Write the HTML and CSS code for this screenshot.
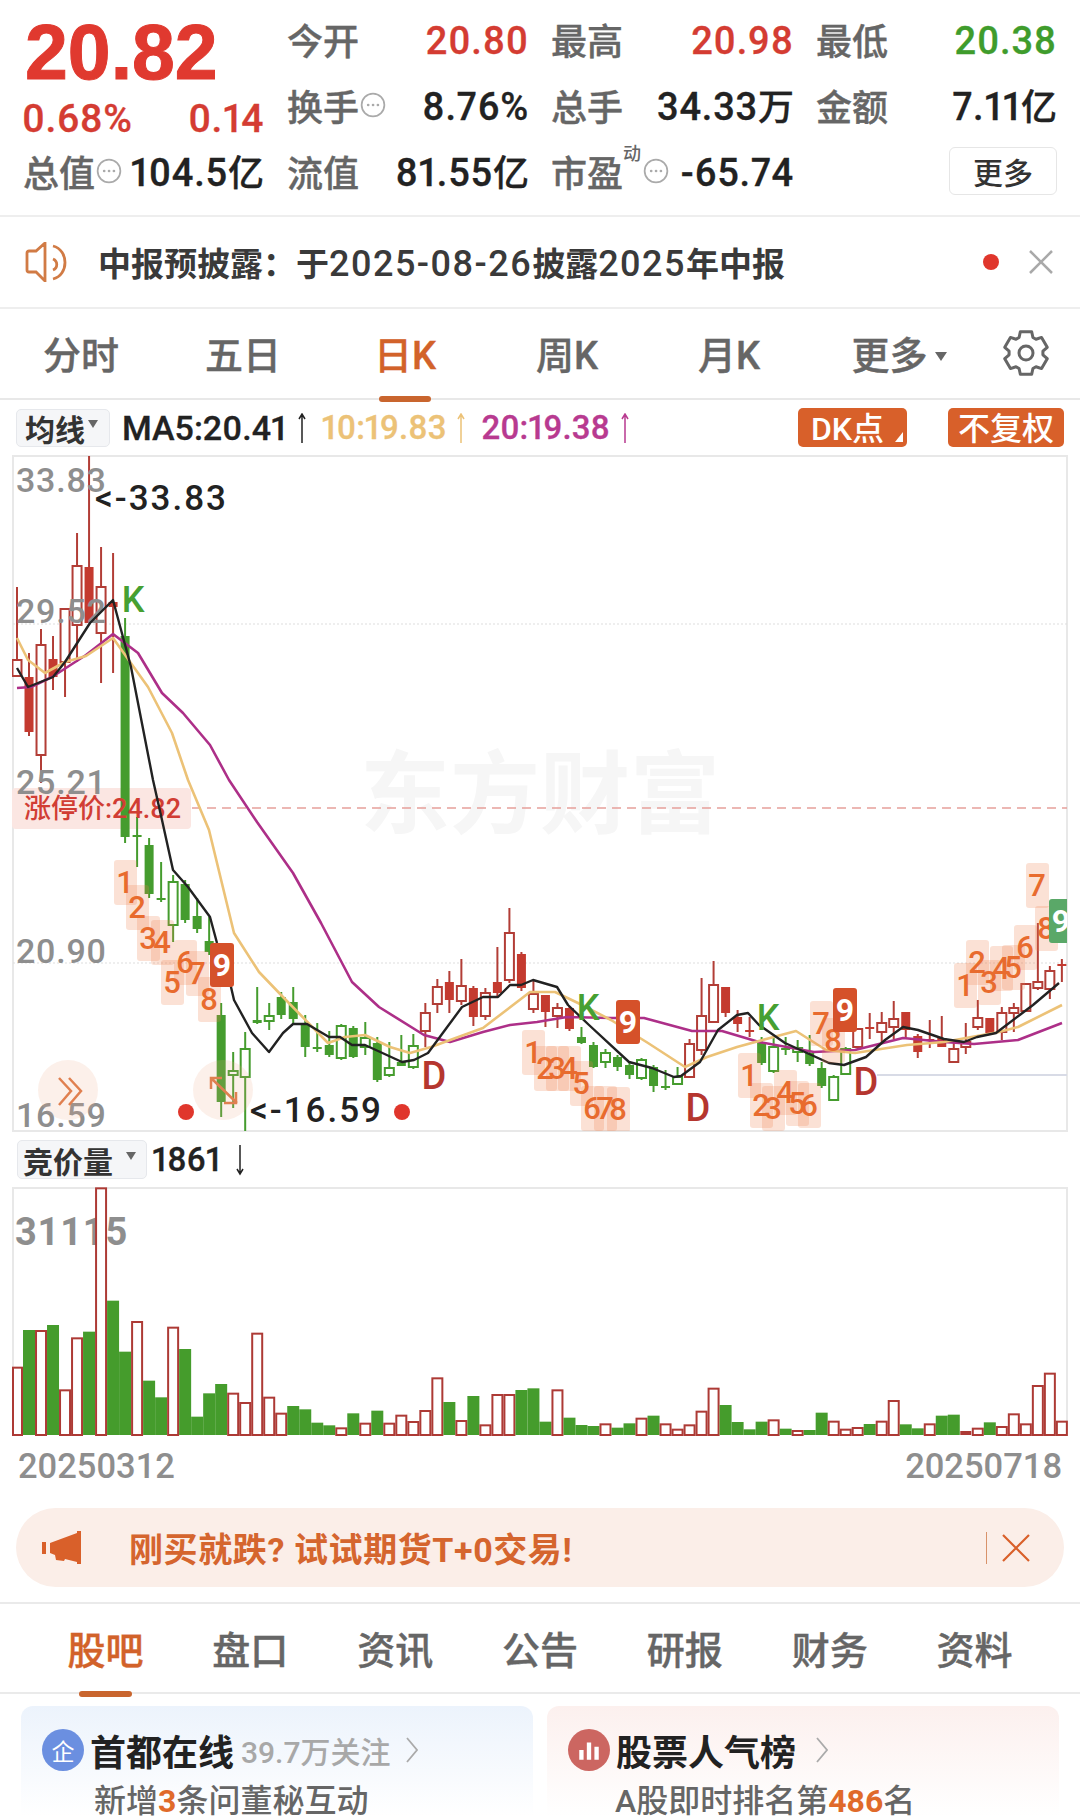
FILE: index.html
```html
<!DOCTYPE html>
<html lang="zh-CN">

<head>
    <meta charset="UTF-8">
    <meta name="viewport" content="width=device-width, initial-scale=1.0">
    <title>首都在线 日K</title>
    <link rel="stylesheet" href="styles.css">
</head>

<body>
    <section class="quote">
        <div class="price">20.82</div>
        <div class="cell"><span class="label">今开</span><span class="num up">20.80</span></div>
        <div class="cell"><span class="label">最高</span><span class="num up">20.98</span></div>
        <div class="cell"><span class="label">最低</span><span class="num down">20.38</span></div>

        <div class="change"><span>0.68%</span><span>0.14</span></div>
        <div class="cell">
            <span class="label with-dots">换手<svg class="dots" viewBox="0 0 24 24"><circle cx="12" cy="12" r="10.5"/><path d="M7.5 12h.1M12 12h.1M16.5 12h.1"/></svg></span>
            <span class="num">8.76%</span>
        </div>
        <div class="cell"><span class="label">总手</span><span class="num">34.33<span class="unit">万</span></span></div>
        <div class="cell"><span class="label">金额</span><span class="num">7.11<span class="unit">亿</span></span></div>

        <div class="cell cell-first">
            <span class="label with-dots">总值<svg class="dots" viewBox="0 0 24 24"><circle cx="12" cy="12" r="10.5"/><path d="M7.5 12h.1M12 12h.1M16.5 12h.1"/></svg></span>
            <span class="num">104.5<span class="unit">亿</span></span>
        </div>
        <div class="cell"><span class="label">流值</span><span class="num">81.55<span class="unit">亿</span></span></div>
        <div class="cell">
            <span class="label with-dots">市盈<sup class="dyn">动</sup><svg class="dots" viewBox="0 0 24 24"><circle cx="12" cy="12" r="10.5"/><path d="M7.5 12h.1M12 12h.1M16.5 12h.1"/></svg></span>
            <span class="num">-65.74</span>
        </div>
        <div class="cell cell-more"><button class="more-btn">更多</button></div>
    </section>

    <section class="notice">
        <svg class="notice-icon" viewBox="0 0 44 40">
            <path d="M11 9H4a2 2 0 0 0-2 2v17a2 2 0 0 0 2 2h7l9 9V1z"/>
            <path d="M28 17c5 2 5 9 0 11"/>
            <path d="M28 4c16 4 16 29 0 33"/>
        </svg>
        <span class="notice-text">中报预披露：于<span class="wide">2025-08-26</span>披露<span class="wide">2025</span>年中报</span>
        <i class="red-dot"></i>
        <svg class="notice-close" viewBox="0 0 24 24"><path d="M1 1l22 22M23 1L1 23"/></svg>
    </section>

    <nav class="period-tabs">
        <a>分时</a>
        <a>五日</a>
        <a class="active">日K</a>
        <a>周K</a>
        <a>月K</a>
        <a class="tab-more">更多<i class="tri"></i></a>
        <svg class="gear" viewBox="0 0 46 46">
            <path d="M17.31 1.75H28.69L29.91 7.47 32.99 9.25 38.56 7.44 44.25 17.31 39.91 21.22V24.78L44.25 28.69 38.56 38.56 32.99 36.75 29.91 38.53 28.69 44.25H17.31L16.09 38.53 13.01 36.75 7.44 38.56 1.75 28.69 6.09 24.78V21.22L1.75 17.31 7.44 7.44 13.01 9.25 16.09 7.47z"/>
            <circle cx="23" cy="23" r="7"/>
        </svg>
    </nav>

    <div class="ma-row">
        <span class="pill">均线<i class="tri tri-dark"></i></span>
        <span class="ma ma5">MA5:20.41<svg class="arrow" viewBox="0 0 10 30"><path d="M5 30V1M2 6l3-5 3 5"/></svg></span>
        <span class="ma ma10">10:19.83<svg class="arrow" viewBox="0 0 10 30"><path d="M5 30V1M2 6l3-5 3 5"/></svg></span>
        <span class="ma ma20">20:19.38<svg class="arrow" viewBox="0 0 10 30"><path d="M5 30V1M2 6l3-5 3 5"/></svg></span>
        <span class="tag tag-dk">DK点<i class="tag-corner"></i></span>
        <span class="tag tag-fq">不复权</span>
    </div>

    <svg id="kline" class="chart" width="1080" height="677" viewBox="0 455 1080 677">
        <defs>
            <clipPath id="klineClip"><rect x="12" y="456" width="1055" height="675"/></clipPath>
        </defs>
        <rect class="frame" x="13" y="456" width="1054" height="675"/>
        <text class="watermark" x="540" y="795">东方财富</text>
        <path class="grid" d="M13 624H1067M13 963H1067"/>
        <path class="limit-line" d="M192 808H1067"/>
        <path class="support" d="M877 1075H1067"/>
        <rect class="limit-bg" x="12" y="788" width="179" height="41" rx="4"/>
        <g id="candles" clip-path="url(#klineClip)"></g>
        <text class="axis" x="16" y="480">33.83</text>
        <text class="axis" x="16" y="611">29.52</text>
        <text class="axis" x="16" y="782">25.21</text>
        <text class="axis" x="16" y="951">20.90</text>
        <text class="axis" x="16" y="1115">16.59</text>
        <text class="limit-text" x="24" y="809">涨停价:24.82</text>
        <g id="maLines"></g>
        <g id="signals" clip-path="url(#klineClip)"></g>
        <text class="extreme" x="95" y="498">&lt;-33.83</text>
        <text class="extreme" x="250" y="1110">&lt;-16.59</text>
        <circle class="dot" cx="186" cy="1112" r="8"/>
        <circle class="dot" cx="402" cy="1112" r="8"/>
        <circle class="float-btn" cx="68" cy="1090" r="30"/>
        <path class="float-mark" d="M59 1078l12 13-12 14M69 1078l12 13-12 14"/>
        <circle class="float-btn" cx="223" cy="1090" r="30"/>
        <path class="float-mark" d="M211 1078l26 25M211 1089v-11h11M236 1092v11h-12"/>
    </svg>

    <div class="vol-row">
        <span class="pill pill-vol">竞价量<i class="tri tri-dark"></i></span>
        <span class="ma">1861<svg class="arrow arrow-down" viewBox="0 0 10 30"><path d="M5 0v29M2 24l3 5 3-5"/></svg></span>
    </div>

    <svg id="volume" class="chart" width="1080" height="249" viewBox="0 1187 1080 249">
        <path class="frame-open" d="M13 1436V1188H1067V1436"/>
        <text class="axis axis-bold" x="15" y="1232">31115</text>
        <g id="volBars"></g>
    </svg>

    <div class="dates"><span>20250312</span><span>20250718</span></div>

    <div class="ad">
        <svg class="ad-icon" viewBox="0 0 40 36">
            <path d="M0 12h4v12H0zM8 13L35 3V1h4v33h-4v-2l-12-3-1 2-8-1-1-5-5-2z"/>
        </svg>
        <span class="ad-text">刚买就跌? 试试期货T+0交易!</span>
        <i class="ad-sep"></i>
        <svg class="ad-close" viewBox="0 0 28 28"><path d="M1 1l26 26M27 1L1 27"/></svg>
    </div>

    <nav class="news-tabs">
        <a class="active">股吧</a>
        <a>盘口</a>
        <a>资讯</a>
        <a>公告</a>
        <a>研报</a>
        <a>财务</a>
        <a>资料</a>
    </nav>

    <div class="cards">
        <div class="card card-blue">
            <div class="card-head">
                <span class="badge badge-blue">企</span>
                <strong>首都在线</strong>
                <span class="follow">39.7万关注</span>
                <svg class="chev" viewBox="0 0 12 26"><path d="M1 1l10 12L1 25"/></svg>
            </div>
            <p class="card-sub">新增<b>3</b>条问董秘互动</p>
        </div>
        <div class="card card-red">
            <div class="card-head">
                <span class="badge badge-red"><svg viewBox="0 0 24 24"><path d="M3 12h4v9H3zM10 5h4v16h-4zM17 9h4v12h-4z"/></svg></span>
                <strong>股票人气榜</strong>
                <svg class="chev chev-far" viewBox="0 0 12 26"><path d="M1 1l10 12L1 25"/></svg>
            </div>
            <p class="card-sub">A股即时排名第<b>486</b>名</p>
        </div>
    </div>

    <script src="chart.js"></script>
</body>

</html>
```

FILE: styles.css
```css
* {
    box-sizing: border-box;
}

html,
body {
    margin: 0;
    height: 1820px;
    overflow: hidden;
}

body {
    width: 1080px;
    background: #fff;
    color: #222;
    font-family: Roboto, "Noto Sans CJK SC", sans-serif;
}

/* quote block */
.quote {
    display: grid;
    grid-template-columns: 242px 242px 243px 241px;
    grid-auto-rows: 66px;
    column-gap: 22px;
    height: 217px;
    padding: 8px 21px 0 23px;
    border-bottom: 2px solid #eee;
}

.price {
    font-family: "Liberation Sans", sans-serif;
    font-size: 77px;
    font-weight: 700;
    line-height: 1;
    color: #e0392f;
    padding: 6px 0 0 2px;
    -webkit-text-stroke: 1px #e0392f;
}

.cell {
    display: flex;
    align-items: center;
    justify-content: space-between;
}

.cell-first {
    padding-right: 1px;
}

.label {
    font-size: 36px;
    color: #666;
    font-weight: 500;
    white-space: nowrap;
    padding-bottom: 5px;
    -webkit-text-stroke: 0.4px #666;
}

.with-dots {
    display: flex;
    align-items: center;
}

.dots {
    width: 26px;
    height: 26px;
    margin-left: 1px;
    fill: none;
    stroke: #aaa;
    stroke-width: 1.6;
    stroke-linecap: round;
}

.dots path {
    stroke-width: 2.4;
}

.dyn {
    font-size: 18px;
    align-self: flex-start;
    margin: 0 1px 0 0;
    line-height: 1;
    color: #666;
    -webkit-text-stroke: 0;
}

.num {
    font-size: 38px;
    font-weight: 500;
    letter-spacing: 0.8px;
    line-height: 44px;
    white-space: nowrap;
    font-feature-settings: "pnum";
    -webkit-text-stroke: 0.3px currentColor;
}

.unit {
    font-size: 36px;
    line-height: 0;
    letter-spacing: 0;
}

.up,
.change {
    color: #d43c32;
}

.down {
    color: #3f9c2c;
}

.change {
    display: flex;
    justify-content: space-between;
    margin: 0 1px 0 -1px;
    padding-top: 26px;
    font-size: 39px;
    font-weight: 500;
    letter-spacing: 0.5px;
    line-height: 1;
    font-feature-settings: "pnum";
    -webkit-text-stroke: 0.3px currentColor;
}

.cell-more {
    justify-content: flex-end;
    padding-bottom: 4px;
}

.more-btn {
    width: 108px;
    height: 48px;
    border: 1px solid #e6e6e6;
    border-radius: 6px;
    background: #fff;
    color: #333;
    font-family: inherit;
    font-size: 30px;
    font-weight: 500;
    padding: 0;
}

/* notice */
.notice {
    display: flex;
    align-items: center;
    height: 92px;
    padding: 0 27px 0 25px;
    border-bottom: 2px solid #eee;
}

.notice-icon {
    width: 44px;
    height: 40px;
    fill: none;
    stroke: #d17b45;
    stroke-width: 2.8;
}

.notice-text {
    margin-left: 29px;
    font-size: 33px;
    font-weight: 700;
    color: #3a3a3a;
    flex: 1;
    white-space: nowrap;
}

.wide {
    font-size: 36px;
    font-weight: 500;
    letter-spacing: 1.5px;
}

.red-dot {
    width: 16px;
    height: 16px;
    border-radius: 50%;
    background: #e0362c;
    margin-right: 30px;
}

.notice-close {
    width: 24px;
    height: 24px;
    fill: none;
    stroke: #a9a9a9;
    stroke-width: 2.5;
}

/* period tabs */
.period-tabs {
    display: flex;
    align-items: center;
    height: 91px;
    padding-bottom: 3px;
    border-bottom: 2px solid #e8e8e8;
}

.period-tabs a {
    position: relative;
    width: 162px;
    text-align: center;
    font-size: 38px;
    font-weight: 500;
    color: #666;
    -webkit-text-stroke: 0.4px currentColor;
}

.period-tabs a.tab-more {
    padding-left: 16px;
}

.tab-more .tri {
    margin-left: 7px;
}

.period-tabs a.active,
.news-tabs a.active {
    color: #d2622a;
}

.period-tabs a.active::after {
    content: "";
    position: absolute;
    left: 55px;
    bottom: -22px;
    width: 52px;
    height: 6px;
    border-radius: 3px;
    background: #c9652e;
}

.tri {
    display: inline-block;
    width: 0;
    height: 0;
    margin-left: 5px;
    vertical-align: 8px;
    border-left: 6px solid transparent;
    border-right: 6px solid transparent;
    border-top: 9px solid #666;
}

.gear {
    width: 46px;
    height: 46px;
    margin: 2px 0 0 31px;
    fill: none;
    stroke: #666;
    stroke-width: 3;
    stroke-linejoin: round;
}

/* ma row */
.ma-row {
    display: flex;
    align-items: center;
    height: 55px;
    padding: 0 16px;
}

.pill {
    display: inline-flex;
    align-items: center;
    flex: none;
    width: 94px;
    height: 38px;
    padding: 0 0 0 8px;
    border: 1px solid #e6e8ec;
    border-radius: 5px;
    background: #f5f6f8;
    font-size: 30px;
    font-weight: 700;
    color: #333;
}

.tri-dark {
    margin-left: 3px;
    vertical-align: 0;
    border-left-width: 5px;
    border-right-width: 5px;
    border-top-width: 8px;
    margin-top: -8px;
}

.ma {
    display: inline-flex;
    align-items: center;
    margin-left: 12px;
    font-size: 33px;
    font-weight: 500;
    color: #222;
    font-feature-settings: "pnum";
    -webkit-text-stroke: 0.3px currentColor;
}

.ma5 {
    font-size: 34px;
}

.ma10 {
    color: #ecc277;
    margin-left: 15px;
}

.ma20 {
    color: #b83a90;
    margin-left: 15px;
}

.arrow {
    width: 10px;
    height: 30px;
    margin-left: 10px;
    fill: none;
    stroke: currentColor;
    stroke-width: 1.5;
}

.tag {
    position: relative;
    display: flex;
    align-items: center;
    justify-content: center;
    height: 39px;
    padding-bottom: 3px;
    border-radius: 5px;
    background: #d8602a;
    color: #fff;
    font-size: 32px;
    font-weight: 500;
}

.tag-dk {
    width: 109px;
    margin-left: auto;
    padding-right: 10px;
}

.tag-corner {
    position: absolute;
    right: 4px;
    bottom: 5px;
    border-left: 8px solid transparent;
    border-bottom: 10px solid #fff;
}

.tag-fq {
    width: 116px;
    margin-left: 41px;
}

/* charts */
.chart {
    display: block;
}

.frame {
    fill: #fff;
    stroke: #e8e8e8;
    stroke-width: 2;
}

.frame-open {
    fill: none;
    stroke: #e8e8e8;
    stroke-width: 2;
}

.watermark {
    font-size: 90px;
    font-weight: 700;
    fill: #f6f6f6;
    text-anchor: middle;
    dominant-baseline: central;
}

.grid {
    stroke: #ddd;
    stroke-width: 1;
    stroke-dasharray: 2 2;
}

.limit-line {
    stroke: #e6a09a;
    stroke-width: 1.5;
    stroke-dasharray: 9 6;
}

.support {
    stroke: #d8dbe6;
    stroke-width: 2;
}

.limit-bg {
    fill: #fbe6e2;
}

.limit-text {
    font-size: 27px;
    font-weight: 500;
    fill: #d13d34;
    dominant-baseline: central;
}

.axis {
    font-size: 34px;
    font-weight: 500;
    letter-spacing: 0.8px;
    fill: #8e8e8e;
    dominant-baseline: central;
}

.axis-bold {
    font-weight: 700;
    font-size: 38px;
}

.extreme {
    font-size: 35px;
    font-weight: 500;
    letter-spacing: 2px;
    fill: #222;
    dominant-baseline: central;
}

.dot {
    fill: #e0362c;
}

.float-btn {
    fill: rgba(240, 170, 140, 0.18);
}

.float-mark {
    fill: none;
    stroke: #e08050;
    stroke-width: 2.5;
}

.ma-line {
    fill: none;
    stroke-linejoin: round;
}

.td-box {
    fill: rgba(238, 130, 80, 0.24);
}

.td-num {
    font-size: 31px;
    font-weight: 500;
    fill: #e86b2e;
    text-anchor: middle;
    dominant-baseline: central;
}

.nine-num {
    font-size: 32px;
    font-weight: 700;
    fill: #fff;
    text-anchor: middle;
    dominant-baseline: central;
}

.sig-k,
.sig-d {
    font-weight: 500;
    text-anchor: middle;
    dominant-baseline: central;
}

.sig-k {
    font-size: 36px;
    fill: #46a032;
}

.sig-d {
    font-size: 38px;
    fill: #b5362f;
}

.vol-row {
    display: flex;
    align-items: center;
    height: 55px;
    padding: 0 0 0 17px;
}

.pill-vol {
    width: 130px;
    height: 39px;
    padding: 0 0 0 5px;
    font-size: 30px;
}

.pill-vol .tri {
    margin-left: 13px;
}

.vol-row .ma {
    margin-left: 5px;
    font-size: 33px;
}

.arrow-down {
    margin-left: 14px;
    height: 32px;
}

.dates {
    display: flex;
    justify-content: space-between;
    height: 72px;
    padding: 10px 18px 0 18px;
    font-size: 34.5px;
    font-weight: 500;
    line-height: 40px;
    color: #8e8e8e;
}

/* ad bar */
.ad {
    display: flex;
    align-items: center;
    height: 79px;
    margin: 0 16px;
    padding: 0 34px 0 26px;
    border-radius: 40px;
    background: #fbeee8;
}

.ad-icon {
    width: 40px;
    height: 36px;
    fill: #d9602a;
}

.ad-text {
    margin-left: 47px;
    flex: 1;
    font-size: 34px;
    font-weight: 700;
    letter-spacing: 0.6px;
    color: #d5652e;
}

.ad-sep {
    width: 1px;
    height: 32px;
    background: #d8926a;
}

.ad-close {
    width: 28px;
    height: 28px;
    margin-left: 15px;
    fill: none;
    stroke: #d9602a;
    stroke-width: 2.2;
}

/* news tabs */
.news-tabs {
    display: flex;
    align-items: center;
    height: 92px;
    margin-top: 15px;
    padding: 0 33px 2px;
    border-top: 2px solid #eaeaea;
    border-bottom: 2px solid #eaeaea;
}

.news-tabs a {
    position: relative;
    width: 145px;
    text-align: center;
    font-size: 38px;
    font-weight: 500;
    color: #666;
    -webkit-text-stroke: 0.4px currentColor;
}

.news-tabs a.active::after {
    content: "";
    position: absolute;
    left: 46px;
    bottom: -22px;
    width: 53px;
    height: 6px;
    border-radius: 3px;
    background: #c9652e;
}

/* cards */
.cards {
    display: flex;
    gap: 14px;
    margin-top: 12px;
    padding: 0 21px;
}

.card {
    width: 512px;
    height: 130px;
    padding: 21px 21px 0;
    border-radius: 12px;
}

.card-blue {
    background: linear-gradient(#ecf3fc, #fff 85%);
}

.card-red {
    background: linear-gradient(#fcf0ee, #fff 85%);
}

.card-head {
    display: flex;
    align-items: center;
    height: 46px;
}

.badge {
    display: flex;
    align-items: center;
    justify-content: center;
    width: 42px;
    height: 42px;
    margin-right: 6px;
    border-radius: 50%;
    color: #fff;
    font-size: 23px;
}

.badge svg {
    width: 26px;
    height: 26px;
    fill: #fff;
}

.badge-blue {
    background: #6b8fe0;
}

.badge-red {
    background: #cc6661;
}

.card-head strong {
    font-size: 36px;
    font-weight: 700;
    color: #222;
}

.follow {
    margin-left: 7px;
    font-size: 30px;
    font-weight: 500;
    color: #a8a8a8;
}

.chev {
    width: 12px;
    height: 26px;
    margin-left: 15px;
    fill: none;
    stroke: #aaa;
    stroke-width: 1.8;
}

.chev-far {
    margin-left: 20px;
}

.card-sub {
    margin: 7px 0 0 52px;
    font-size: 32px;
    line-height: 42px;
    font-weight: 500;
    color: #666;
}

.card-red .card-sub {
    margin-left: 47px;
}

.card-sub b {
    color: #e06a2a;
}
```

FILE: chart.js
```js
// k line + volume, all page coords (x, y) so they line up with the viewBox
var X0 = 17;
var STEP = 12.01;
var NS = 'http://www.w3.org/2000/svg';

// type: H hollow red, R solid red, G solid green, g hollow green
// [type, bodyTop, bodyBottom, wickTop, wickBottom]
var candles = [
    ['H', 660, 676, 587, 676], ['R', 677, 732, 653, 736], ['H', 645, 755, 629, 783], ['R', 659, 677, 636, 690],
    ['H', 609, 662, 609, 697], ['H', 566, 625, 533, 662], ['R', 567, 623, 455, 623], ['H', 587, 633, 547, 683],
    ['R', 602, 607, 553, 673], ['G', 636, 837, 618, 843], ['G', 835, 837, 817, 867], ['G', 845, 894, 838, 898],
    ['G', 898, 900, 862, 902], ['g', 882, 925, 875, 942], ['G', 884, 920, 880, 923], ['G', 916, 929, 898, 933],
    ['G', 941, 952, 917, 955], ['G', 1015, 1102, 1003, 1117], ['g', 1071, 1075, 1052, 1108], ['g', 1049, 1077, 1032, 1131],
    ['G', 1020, 1023, 987, 1024], ['g', 1016, 1021, 1003, 1030], ['G', 997, 1015, 992, 1019], ['G', 1002, 1019, 987, 1023],
    ['G', 1024, 1047, 1015, 1057], ['G', 1047, 1049, 1023, 1052], ['G', 1045, 1055, 1031, 1057], ['g', 1026, 1058, 1024, 1060],
    ['G', 1028, 1057, 1026, 1058], ['g', 1038, 1047, 1022, 1055], ['G', 1043, 1080, 1037, 1082], ['g', 1068, 1075, 1042, 1077],
    ['G', 1062, 1066, 1035, 1066], ['g', 1046, 1067, 1034, 1069], ['H', 1013, 1031, 1003, 1047], ['H', 987, 1004, 979, 1013],
    ['R', 982, 1000, 971, 1013], ['H', 986, 1001, 959, 1005], ['R', 988, 1017, 986, 1026], ['H', 993, 1016, 988, 1020],
    ['R', 982, 993, 947, 997], ['H', 933, 980, 908, 983], ['R', 954, 988, 952, 991], ['H', 994, 1009, 980, 1013],
    ['R', 995, 1012, 995, 1027], ['H', 1008, 1016, 1003, 1028], ['R', 1008, 1029, 1006, 1031], ['G', 1037, 1043, 1027, 1044],
    ['G', 1045, 1067, 1042, 1068], ['g', 1053, 1062, 1049, 1068], ['G', 1057, 1067, 1055, 1071], ['G', 1065, 1075, 1063, 1079],
    ['g', 1060, 1078, 1058, 1080], ['G', 1067, 1086, 1065, 1092], ['G', 1086, 1088, 1070, 1090], ['g', 1077, 1084, 1067, 1085],
    ['H', 1044, 1077, 1039, 1077], ['H', 1016, 1050, 978, 1055], ['H', 985, 1022, 961, 1023], ['R', 987, 1013, 987, 1017],
    ['R', 1017, 1024, 1010, 1032], ['R', 1030, 1032, 1017, 1037], ['G', 1043, 1063, 1037, 1065], ['g', 1047, 1071, 1038, 1073],
    ['G', 1048, 1050, 1037, 1055], ['g', 1048, 1052, 1040, 1062], ['G', 1053, 1064, 1035, 1066], ['G', 1068, 1086, 1062, 1088],
    ['g', 1077, 1100, 1075, 1101], ['g', 1049, 1074, 1047, 1075], ['H', 1029, 1047, 1029, 1050], ['R', 1027, 1029, 1013, 1039],
    ['H', 1023, 1032, 1012, 1042], ['H', 1019, 1027, 1001, 1039], ['R', 1012, 1030, 1012, 1038], ['R', 1036, 1052, 1034, 1058],
    ['R', 1039, 1041, 1020, 1048], ['R', 1038, 1047, 1016, 1047], ['H', 1049, 1062, 1041, 1063], ['H', 1042, 1047, 1023, 1054],
    ['H', 1018, 1027, 1000, 1030], ['R', 1018, 1033, 1018, 1033], ['H', 1013, 1032, 1007, 1040], ['H', 1008, 1013, 1003, 1032],
    ['H', 984, 1011, 984, 1012], ['H', 982, 988, 923, 990], ['H', 971, 989, 966, 999], ['R', 964, 966, 959, 982]
];

// [type, top] with h hollow, g green, r solid red; top is read off a 3x crop
var vol = [
    ['h', 680], ['g', 570], ['h', 570], ['g', 555], ['h', 748], ['h', 592], ['g', 575], ['h', 142], ['g', 482], ['g', 635],
    ['h', 543], ['g', 722], ['g', 772], ['h', 560], ['g', 627], ['g', 830], ['g', 760], ['g', 732], ['h', 758], ['h', 786],
    ['h', 578], ['h', 770], ['h', 818], ['g', 798], ['g', 808], ['g', 848], ['g', 856], ['h', 862], ['g', 820], ['h', 848],
    ['g', 812], ['h', 848], ['h', 824], ['h', 843], ['h', 810], ['h', 712], ['g', 786], ['h', 840], ['g', 768], ['h', 853],
    ['h', 762], ['h', 762], ['g', 750], ['g', 745], ['g', 845], ['h', 748], ['g', 833], ['g', 855], ['g', 858], ['h', 850],
    ['g', 863], ['g', 850], ['h', 833], ['g', 827], ['h', 850], ['h', 866], ['h', 853], ['h', 812], ['h', 743], ['g', 795],
    ['g', 846], ['g', 868], ['g', 845], ['h', 838], ['g', 866], ['h', 870], ['g', 870], ['g', 818], ['h', 842], ['h', 866],
    ['h', 861], ['g', 852], ['h', 842], ['h', 780], ['g', 853], ['g', 865], ['h', 850], ['g', 827], ['g', 824], ['r', 873],
    ['h', 863], ['g', 847], ['h', 858], ['h', 820], ['h', 850], ['h', 735], ['h', 698], ['h', 842]
];

var ma5 = '17,668 28,687 53,677 65,662 90,623 113,600 131,667 153,780 162,820 173,870 188,887 210,917 217,943 231,987 234,1000 252,1033 269,1052 283,1033 293,1024 307,1024 329,1037 340,1037 352,1045 365,1045 402,1062 414,1060 428,1053 462,1007 483,997 498,997 510,985 521,985 533,980 557,987 568,1005 589,1025 629,1062 652,1068 674,1077 681,1076 700,1062 718,1030 737,1015 748,1013 759,1025 785,1043 829,1063 844,1065 866,1057 885,1040 903,1027 918,1030 944,1039 964,1042 977,1037 996,1033 1033,1005 1059,983';
var ma10 = '17,638 28,660 45,673 65,662 86,656 113,638 148,687 172,733 188,780 209,830 234,933 259,972 283,997 328,1043 345,1037 365,1035 390,1047 410,1053 431,1047 483,1028 500,1015 530,992 555,992 578,1003 611,1020 648,1043 685,1067 707,1057 737,1047 796,1031 826,1050 855,1053 907,1045 944,1042 999,1032 1018,1027 1062,1005';
var ma20 = '17,688 31,687 52,677 86,655 113,634 138,653 162,693 183,713 210,745 229,780 257,822 293,873 321,923 352,982 379,1007 424,1035 450,1042 483,1032 510,1025 537,1022 567,1017 611,1018 644,1018 692,1031 722,1031 759,1042 814,1052 855,1050 903,1038 944,1042 974,1044 1018,1040 1062,1023';

// nine-turn counts: [digit, x, y]
var counts = [
    [1, 125, 882], [2, 137, 907], [3, 148, 938], [4, 162, 942], [5, 172, 982], [6, 185, 962], [7, 197, 973], [8, 209, 999],
    [1, 533, 1052], [2, 545, 1068], [3, 557, 1068], [4, 569, 1068], [5, 581, 1083], [6, 592, 1108], [7, 605, 1108], [8, 618, 1109],
    [1, 749, 1075], [2, 761, 1105], [3, 773, 1108], [4, 785, 1092], [5, 797, 1103], [6, 809, 1105], [7, 821, 1023], [8, 833, 1040],
    [1, 965, 985], [2, 977, 962], [3, 989, 982], [4, 1001, 968], [5, 1013, 967], [6, 1025, 947], [7, 1037, 885], [8, 1046, 928]
];
var nines = [[222, 965, '#d5512a'], [628, 1022, '#d5512a'], [845, 1010, '#d5512a'], [1061, 921, '#5aa868']];
var letters = [['k', 'K', 133, 600], ['d', 'D', 434, 1076], ['k', 'K', 588, 1008], ['d', 'D', 698, 1108], ['k', 'K', 768, 1018], ['d', 'D', 866, 1082]];

function el(name, attrs, parent, text) {
    var node = document.createElementNS(NS, name);
    for (var key in attrs) {
        node.setAttribute(key, attrs[key]);
    }
    if (text !== undefined) {
        node.textContent = text;
    }
    parent.appendChild(node);
    return node;
}

function drawCandles() {
    var group = document.getElementById('candles');
    candles.forEach(function (c, i) {
        var x = X0 + STEP * i;
        var red = c[0] === 'H' || c[0] === 'R';
        var line = red ? '#b23d36' : '#459c2e';
        el('path', { d: 'M' + x + ' ' + c[3] + 'V' + c[4], stroke: line, 'stroke-width': 2 }, group);
        if (c[0] === 'H' || c[0] === 'g') {
            el('rect', { x: x - 4.5, y: c[1], width: 9, height: c[2] - c[1], fill: '#fff', stroke: line, 'stroke-width': 2 }, group);
        } else {
            el('rect', { x: x - 4.5, y: c[1], width: 9, height: c[2] - c[1], fill: red ? '#c43a2f' : line }, group);
        }
    });
}

function drawLines() {
    var group = document.getElementById('maLines');
    el('polyline', { 'class': 'ma-line', points: ma20, stroke: '#ad2f88', 'stroke-width': 2.6 }, group);
    el('polyline', { 'class': 'ma-line', points: ma10, stroke: '#ecc277', 'stroke-width': 2.6 }, group);
    el('polyline', { 'class': 'ma-line', points: ma5, stroke: '#222', 'stroke-width': 2.4 }, group);
}

function drawSignals() {
    var group = document.getElementById('signals');
    counts.forEach(function (c) {
        el('rect', { 'class': 'td-box', x: c[1] - 11, y: c[2] - 22, width: 23, height: 45, rx: 3 }, group);
    });
    counts.forEach(function (c) {
        el('text', { 'class': 'td-num', x: c[1], y: c[2] }, group, c[0]);
    });
    nines.forEach(function (n) {
        el('rect', { x: n[0] - 12, y: n[1] - 22, width: 24, height: 44, rx: 3, fill: n[2] }, group);
        el('text', { 'class': 'nine-num', x: n[0], y: n[1] }, group, 9);
    });
    letters.forEach(function (l) {
        el('text', { 'class': 'sig-' + l[0], x: l[2], y: l[3] }, group, l[1]);
    });
}

function drawVolume() {
    var group = document.getElementById('volBars');
    var bottom = 1435;
    vol.forEach(function (v, i) {
        var x = X0 + STEP * i;
        var top = 1140 + v[1] / 3;
        if (v[0] === 'g') {
            el('rect', { x: x - 6, y: top, width: 12, height: bottom - top, fill: '#459c2c' }, group);
        } else if (v[0] === 'r') {
            el('rect', { x: x - 5.5, y: top, width: 11, height: bottom - top, fill: '#ad3a35' }, group);
        } else {
            var left = Math.max(x - 5, 13);
            var width = x + 5 - left;
            el('rect', { x: left, y: top + 1, width: width, height: bottom - top - 1, fill: '#fff', stroke: '#ad3a35', 'stroke-width': 2 }, group);
        }
    });
}

drawCandles();
drawLines();
drawSignals();
drawVolume();
```
